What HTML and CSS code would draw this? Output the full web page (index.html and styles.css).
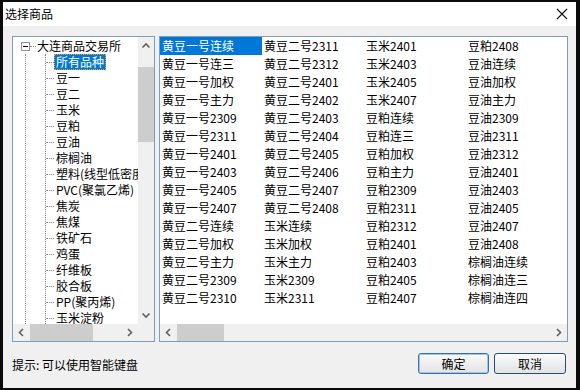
FILE: index.html
```html
<!DOCTYPE html>
<html>
<head>
<meta charset="utf-8">
<link rel="stylesheet" href="styles.css">
</head>
<body>
<div class="window">
  <div class="titlebar">
    <span class="title">选择商品</span>
    <span class="close"><svg width="12" height="12" viewBox="0 0 12 12"><path d="M1 1 L11 11 M11 1 L1 11" stroke="#111" stroke-width="1.1" fill="none"/></svg></span>
  </div>
  <div class="main">
    <div class="tree">
      <div class="tree-content">
        <div class="root-row">
          <span class="expander"><span class="minus"></span></span>
          <span class="root-link"></span>
          <span class="root-label">大连商品交易所</span>
        </div>
        <div class="branch">
          <div class="children">
            <div class="node"><span class="link"></span><span class="label selected">所有品种</span></div>
            <div class="node"><span class="link"></span><span class="label">豆一</span></div>
            <div class="node"><span class="link"></span><span class="label">豆二</span></div>
            <div class="node"><span class="link"></span><span class="label">玉米</span></div>
            <div class="node"><span class="link"></span><span class="label">豆粕</span></div>
            <div class="node"><span class="link"></span><span class="label">豆油</span></div>
            <div class="node"><span class="link"></span><span class="label">棕榈油</span></div>
            <div class="node"><span class="link"></span><span class="label">塑料(线型低密度聚乙烯)</span></div>
            <div class="node"><span class="link"></span><span class="label">PVC(聚氯乙烯)</span></div>
            <div class="node"><span class="link"></span><span class="label">焦炭</span></div>
            <div class="node"><span class="link"></span><span class="label">焦煤</span></div>
            <div class="node"><span class="link"></span><span class="label">铁矿石</span></div>
            <div class="node"><span class="link"></span><span class="label">鸡蛋</span></div>
            <div class="node"><span class="link"></span><span class="label">纤维板</span></div>
            <div class="node"><span class="link"></span><span class="label">胶合板</span></div>
            <div class="node"><span class="link"></span><span class="label">PP(聚丙烯)</span></div>
            <div class="node"><span class="link"></span><span class="label">玉米淀粉</span></div>
            <div class="node"><span class="link"></span><span class="label">乙二醇</span></div>
          </div>
        </div>
      </div>
      <div class="vscroll">
        <span class="arrow"><svg width="16" height="17" viewBox="0 0 16 17"><polyline points="4.5,10.5 8,7 11.5,10.5" stroke="#606060" stroke-width="1.6" fill="none"/></svg></span>
        <div class="vtrack"><div class="vthumb"></div></div>
        <span class="arrow"><svg width="16" height="17" viewBox="0 0 16 17"><polyline points="4.5,6.5 8,10 11.5,6.5" stroke="#606060" stroke-width="1.6" fill="none"/></svg></span>
      </div>
      <div class="hscroll">
        <span class="harrow"><svg width="17" height="17" viewBox="0 0 17 17"><polyline points="10,5 6.5,8.5 10,12" stroke="#606060" stroke-width="1.6" fill="none"/></svg></span>
        <div class="htrack"><div class="hthumb tree-thumb"></div></div>
        <span class="harrow"><svg width="17" height="17" viewBox="0 0 17 17"><polyline points="7,5 10.5,8.5 7,12" stroke="#606060" stroke-width="1.6" fill="none"/></svg></span>
      </div>
      <div class="corner"></div>
    </div>
    <div class="list">
      <div class="grid">
        <span class="item selected">黄豆一号连续</span>
        <span class="item">黄豆一号连三</span>
        <span class="item">黄豆一号加权</span>
        <span class="item">黄豆一号主力</span>
        <span class="item">黄豆一号2309</span>
        <span class="item">黄豆一号2311</span>
        <span class="item">黄豆一号2401</span>
        <span class="item">黄豆一号2403</span>
        <span class="item">黄豆一号2405</span>
        <span class="item">黄豆一号2407</span>
        <span class="item">黄豆二号连续</span>
        <span class="item">黄豆二号加权</span>
        <span class="item">黄豆二号主力</span>
        <span class="item">黄豆二号2309</span>
        <span class="item">黄豆二号2310</span>

        <span class="item">黄豆二号2311</span>
        <span class="item">黄豆二号2312</span>
        <span class="item">黄豆二号2401</span>
        <span class="item">黄豆二号2402</span>
        <span class="item">黄豆二号2403</span>
        <span class="item">黄豆二号2404</span>
        <span class="item">黄豆二号2405</span>
        <span class="item">黄豆二号2406</span>
        <span class="item">黄豆二号2407</span>
        <span class="item">黄豆二号2408</span>
        <span class="item">玉米连续</span>
        <span class="item">玉米加权</span>
        <span class="item">玉米主力</span>
        <span class="item">玉米2309</span>
        <span class="item">玉米2311</span>

        <span class="item">玉米2401</span>
        <span class="item">玉米2403</span>
        <span class="item">玉米2405</span>
        <span class="item">玉米2407</span>
        <span class="item">豆粕连续</span>
        <span class="item">豆粕连三</span>
        <span class="item">豆粕加权</span>
        <span class="item">豆粕主力</span>
        <span class="item">豆粕2309</span>
        <span class="item">豆粕2311</span>
        <span class="item">豆粕2312</span>
        <span class="item">豆粕2401</span>
        <span class="item">豆粕2403</span>
        <span class="item">豆粕2405</span>
        <span class="item">豆粕2407</span>

        <span class="item">豆粕2408</span>
        <span class="item">豆油连续</span>
        <span class="item">豆油加权</span>
        <span class="item">豆油主力</span>
        <span class="item">豆油2309</span>
        <span class="item">豆油2311</span>
        <span class="item">豆油2312</span>
        <span class="item">豆油2401</span>
        <span class="item">豆油2403</span>
        <span class="item">豆油2405</span>
        <span class="item">豆油2407</span>
        <span class="item">豆油2408</span>
        <span class="item">棕榈油连续</span>
        <span class="item">棕榈油连三</span>
        <span class="item">棕榈油连四</span>
      </div>
      <div class="hscroll list-scroll">
        <span class="harrow"><svg width="17" height="17" viewBox="0 0 17 17"><polyline points="10,5 6.5,8.5 10,12" stroke="#606060" stroke-width="1.6" fill="none"/></svg></span>
        <div class="htrack"><div class="hthumb list-thumb"></div></div>
        <span class="harrow"><svg width="17" height="17" viewBox="0 0 17 17"><polyline points="7,5 10.5,8.5 7,12" stroke="#606060" stroke-width="1.6" fill="none"/></svg></span>
      </div>
    </div>
  </div>
  <div class="footer">
    <span class="tip">提示: 可以使用智能键盘</span>
    <button class="btn default">确定</button>
    <button class="btn">取消</button>
  </div>
</div>
</body>
</html>
```

FILE: styles.css
```css
* { box-sizing: border-box; }

body {
  margin: 0;
  width: 580px;
  height: 390px;
  overflow: hidden;
  padding: 2px 4px 2px 3px;
  background: #0b0b0b;
  font-family: "Noto Sans CJK SC", "Noto Sans", sans-serif;
  font-size: 12px;
  color: #000;
}

.window {
  width: 573px;
  height: 386px;
  background: #f0f0f0;
  display: flex;
  flex-direction: column;
}

.titlebar {
  height: 24px;
  flex: none;
  background: #fff;
  display: flex;
  align-items: center;
  justify-content: space-between;
  padding-left: 2px;
}

.title { line-height: 24px; }

.close {
  width: 28px;
  height: 24px;
  display: flex;
  align-items: center;
  justify-content: center;
}

.main {
  flex: none;
  height: 316px;
  display: flex;
  gap: 4px;
  padding: 10px 8px 0 9px;
}

/* tree */
.tree {
  width: 143px;
  height: 306px;
  border: 1px solid #7f9db9;
  background: #fff;
  display: grid;
  grid-template-columns: 125px 16px;
  grid-template-rows: 287px 17px;
}

.tree-content {
  overflow: hidden;
  padding: 1px 0 0 8px;
  white-space: nowrap;
}

.root-row {
  height: 16px;
  display: flex;
  align-items: center;
}

.expander {
  width: 9px;
  height: 9px;
  border: 1px solid #919191;
  background: #fff;
  display: flex;
  align-items: center;
  justify-content: center;
  flex: none;
}

.minus {
  width: 5px;
  height: 1px;
  background: #000;
}

.root-link {
  width: 6px;
  border-top: 1px dotted #8a8a8a;
  flex: none;
}

.root-label {
  margin-left: 1px;
  line-height: 16px;
}

.branch {
  margin-left: 4px;
  border-left: 1px dotted #8a8a8a;
  height: 280px;
}

.children {
  margin-left: 19px;
  border-left: 1px dotted #8a8a8a;
}

.node {
  height: 16px;
  display: flex;
  align-items: center;
}

.link {
  width: 8px;
  border-top: 1px dotted #8a8a8a;
  flex: none;
}

.label {
  line-height: 14px;
  padding: 0 1px;
  border: 1px solid transparent;
  margin-left: 0;
}

.label.selected {
  background: #0078d7;
  color: #fff;
  border: 1px dotted #ff9a1f;
}

.vscroll {
  background: #f0f0f0;
  display: flex;
  flex-direction: column;
}

.arrow {
  height: 17px;
  flex: none;
  display: block;
}

.arrow svg, .harrow svg { display: block; }

.vtrack { flex: 1; }

.vthumb {
  margin-top: 13px;
  height: 75px;
  width: 16px;
  background: #cdcdcd;
}

.hscroll {
  height: 17px;
  background: #f0f0f0;
  display: flex;
}

.harrow {
  width: 17px;
  flex: none;
}

.htrack { flex: 1; }

.hthumb {
  height: 17px;
  background: #cdcdcd;
}

.tree-thumb { width: 63px; }
.list-thumb { width: 47px; }

.corner { background: #f0f0f0; }

/* list */
.list {
  width: 409px;
  height: 306px;
  border: 1px solid #7f9db9;
  background: #fff;
  display: flex;
  flex-direction: column;
}

.grid {
  flex: 1;
  overflow: hidden;
  display: grid;
  grid-auto-flow: column;
  grid-template-rows: repeat(15, 18px);
  grid-auto-columns: 102px;
  align-content: start;
}

.item {
  line-height: 18px;
  padding-left: 2px;
  white-space: nowrap;
}

.item.selected {
  background: #0078d7;
  color: #fff;
}

.list-scroll { flex: none; }

/* footer */
.footer {
  flex: 1;
  display: flex;
  align-items: flex-start;
  padding: 11px 10px 0 9px;
}

.tip {
  flex: 1;
  line-height: 21px;
  margin-top: 1px;
}

.btn {
  width: 72px;
  height: 21px;
  margin-left: 5px;
  padding: 0;
  font-family: inherit;
  font-size: 12px;
  color: #000;
  border: 1px solid #2a4b78;
  border-radius: 3px;
  background: linear-gradient(#fcfcfc, #eeeeee 50%, #e3e3e3);
}

.btn.default {
  width: 71px;
  border-color: #3a6ea5;
  box-shadow: inset 0 0 0 1px #9cc8f0;
}
```
